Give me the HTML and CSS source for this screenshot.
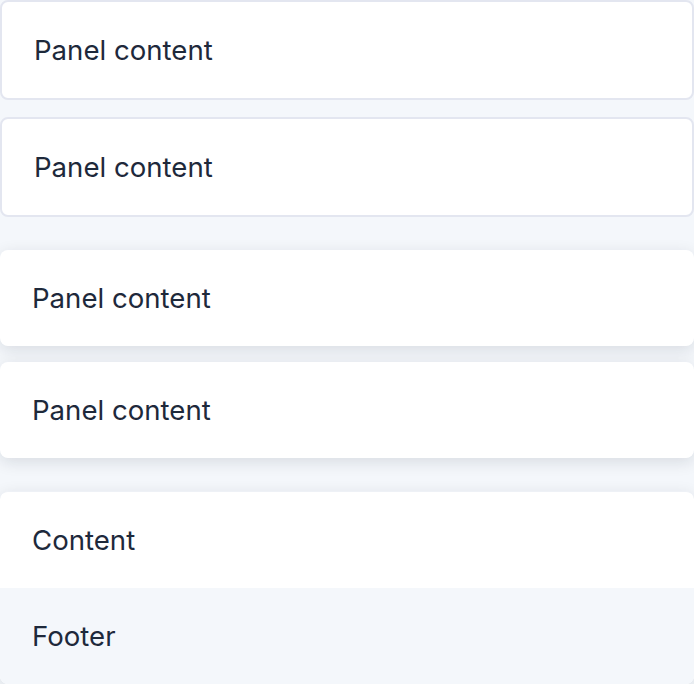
FILE: index.html
```html
<!DOCTYPE html>
<html>
<head>
<meta charset="utf-8">
<link rel="stylesheet" href="styles.css">
</head>
<body>
<div class="page">
  <div class="group group-bordered">
    <div class="panel panel-bordered">Panel content</div>
    <div class="panel panel-bordered">Panel content</div>
  </div>
  <div class="group">
    <div class="panel panel-raised">Panel content</div>
    <div class="panel panel-raised">Panel content</div>
  </div>
  <div class="group">
    <div class="card">
      <div class="card-body">Content</div>
      <div class="card-footer">Footer</div>
    </div>
  </div>
</div>
</body>
</html>
```
FILE: styles.css
```css
html, body {
  margin: 0;
  padding: 0;
  background: #f4f7fb;
}
body {
  font-family: Inter, "Noto Sans", sans-serif;
  font-size: 27.6px;
  line-height: 40px;
  color: #1e293b;
}
.page {
  display: flex;
  flex-direction: column;
  gap: 33px;
}
.group {
  display: flex;
  flex-direction: column;
  gap: 16px;
}
.group-bordered {
  gap: 17px;
}
.panel {
  background: #ffffff;
  border-radius: 8px;
  padding: 28px 32px;
}
.panel-bordered {
  border: 2px solid #e3e6f0;
}
.panel-raised {
  box-shadow: 0 4px 16px rgba(15, 23, 42, 0.12);
}
.card {
  background: #ffffff;
  border-radius: 8px;
  border-top: 1px solid #eef1f6;
  box-shadow: 0 4px 16px rgba(15, 23, 42, 0.12);
  overflow: hidden;
}
.card-body {
  padding: 28px 32px;
}
.card-footer {
  padding: 28px 32px;
  background: #f4f7fb;
}
```
